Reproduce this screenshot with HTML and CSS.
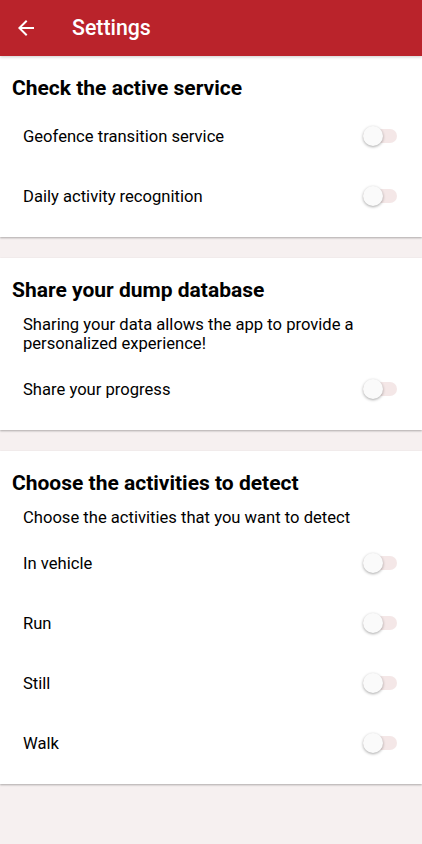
FILE: index.html
```
<!DOCTYPE html>
<html>
<head>
<meta charset="utf-8">
<link rel="stylesheet" href="styles.css">
</head>
<body>
<header class="appbar">
  <svg class="back" width="24" height="24" viewBox="0 0 24 24"><path d="M20 11H7.83l5.59-5.59L12 4l-8 8 8 8 1.41-1.41L7.83 13H20v-2z" fill="#fff"/></svg>
  <h1 class="appbar-title">Settings</h1>
</header>
<main class="content">
  <section class="card">
    <h2 class="card-title">Check the active service</h2>
    <div class="row"><span>Geofence transition service</span><span class="switch"><span class="thumb"></span></span></div>
    <div class="row"><span>Daily activity recognition</span><span class="switch"><span class="thumb"></span></span></div>
  </section>
  <section class="card">
    <h2 class="card-title">Share your dump database</h2>
    <p class="desc">Sharing your data allows the app to provide a personalized experience!</p>
    <div class="row"><span>Share your progress</span><span class="switch"><span class="thumb"></span></span></div>
  </section>
  <section class="card">
    <h2 class="card-title">Choose the activities to detect</h2>
    <p class="desc">Choose the activities that you want to detect</p>
    <div class="row"><span>In vehicle</span><span class="switch"><span class="thumb"></span></span></div>
    <div class="row"><span>Run</span><span class="switch"><span class="thumb"></span></span></div>
    <div class="row"><span>Still</span><span class="switch"><span class="thumb"></span></span></div>
    <div class="row"><span>Walk</span><span class="switch"><span class="thumb"></span></span></div>
  </section>
</main>
</body>
</html>
```
FILE: styles.css
```
* { box-sizing: border-box; }
html, body { margin: 0; padding: 0; }
body {
  background: #f6f0f0;
  font-family: Roboto, "Noto Sans", sans-serif;
  color: #000;
  width: 422px;
  min-height: 844px;
}
.appbar {
  height: 56px;
  background: #ba232b;
  display: flex;
  align-items: center;
  padding-left: 14px;
  position: relative;
  z-index: 1;
  box-shadow: 0 1px 3px rgba(0,0,0,0.2);
}
.back { display: block; }
.appbar-title {
  margin: 0 0 0 34px;
  color: #fff;
  font-size: 21.3px;
  font-weight: 500;
  line-height: 24px;
}
.content {
  display: flex;
  flex-direction: column;
  gap: 20.5px;
}
.card {
  background: #fff;
  padding: 20px 0 11px;
  box-shadow: 0 1px 2px rgba(0,0,0,0.3);
}
.card-title {
  margin: 0 0 6px;
  padding-left: 12px;
  font-size: 21px;
  font-weight: 700;
  line-height: 24px;
}
.desc {
  margin: 13.5px 0 6px;
  padding: 0 23px;
  font-size: 16.6px;
  line-height: 19px;
}
.row {
  height: 60px;
  display: flex;
  align-items: center;
  justify-content: space-between;
  padding: 0 25px 0 23px;
  font-size: 16.6px;
}
.switch {
  position: relative;
  width: 34px;
  height: 14px;
  border-radius: 7px;
  background: #f4e7e7;
}
.thumb {
  position: absolute;
  left: 0;
  top: -3px;
  width: 20px;
  height: 20px;
  border-radius: 50%;
  background: #fafafa;
  box-shadow: 0 1px 3px rgba(0,0,0,0.35);
}
```
